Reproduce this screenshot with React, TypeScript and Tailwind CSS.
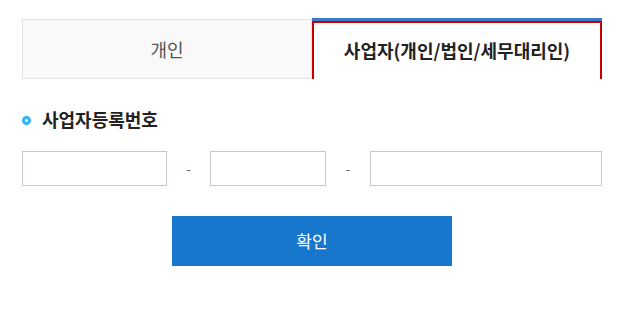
export default function App() {
  return (
    <div
      className="h-[311px] w-[635px] bg-white pl-[22px] pt-[18px]"
      style={{ fontFamily: '"Noto Sans CJK KR", "Noto Sans", sans-serif' }}
    >
      <div className="w-[580px]">
        {/* tabs */}
        <div className="flex h-[61px]">
          <div className="mt-px flex w-[290px] items-center justify-center border border-[#e3e3e3] bg-[#f9f9f9] text-[18px] text-[#555]">
            개인
          </div>
          <div className="flex w-[290px] flex-col border-t-[3px] border-t-[#3b78c6]">
            <div className="flex flex-1 items-center justify-center border-2 border-b-0 border-[#c40000] pb-[2px] text-[18px] font-bold text-[#222]">
              사업자(개인/법인/세무대리인)
            </div>
          </div>
        </div>

        {/* business number */}
        <div className="mt-[28px] flex items-center gap-[11px] leading-6">
          <span className="mt-[3px] h-[9px] w-[9px] rounded-full border-[3px] border-[#2fb7f6] bg-white" />
          <h3 className="text-[18px] font-bold text-[#222]">사업자등록번호</h3>
        </div>

        <div className="mt-[20px] flex h-[35px] items-stretch">
          <input className="w-[145px] min-w-0 border border-[#c7c5d5] bg-white outline-none" />
          <span className="flex w-[43px] items-center justify-center text-[13px] text-[#666]">-</span>
          <input className="w-[116px] min-w-0 border border-[#c7c5d5] bg-white outline-none" />
          <span className="flex w-[44px] items-center justify-center text-[13px] text-[#666]">-</span>
          <input className="min-w-0 flex-1 border border-[#c7c5d5] bg-white outline-none" />
        </div>

        <button className="mx-auto mt-[30px] flex h-[50px] w-[280px] items-center justify-center bg-[#1777cc] text-[17px] text-white">
          확인
        </button>
      </div>
    </div>
  )
}
